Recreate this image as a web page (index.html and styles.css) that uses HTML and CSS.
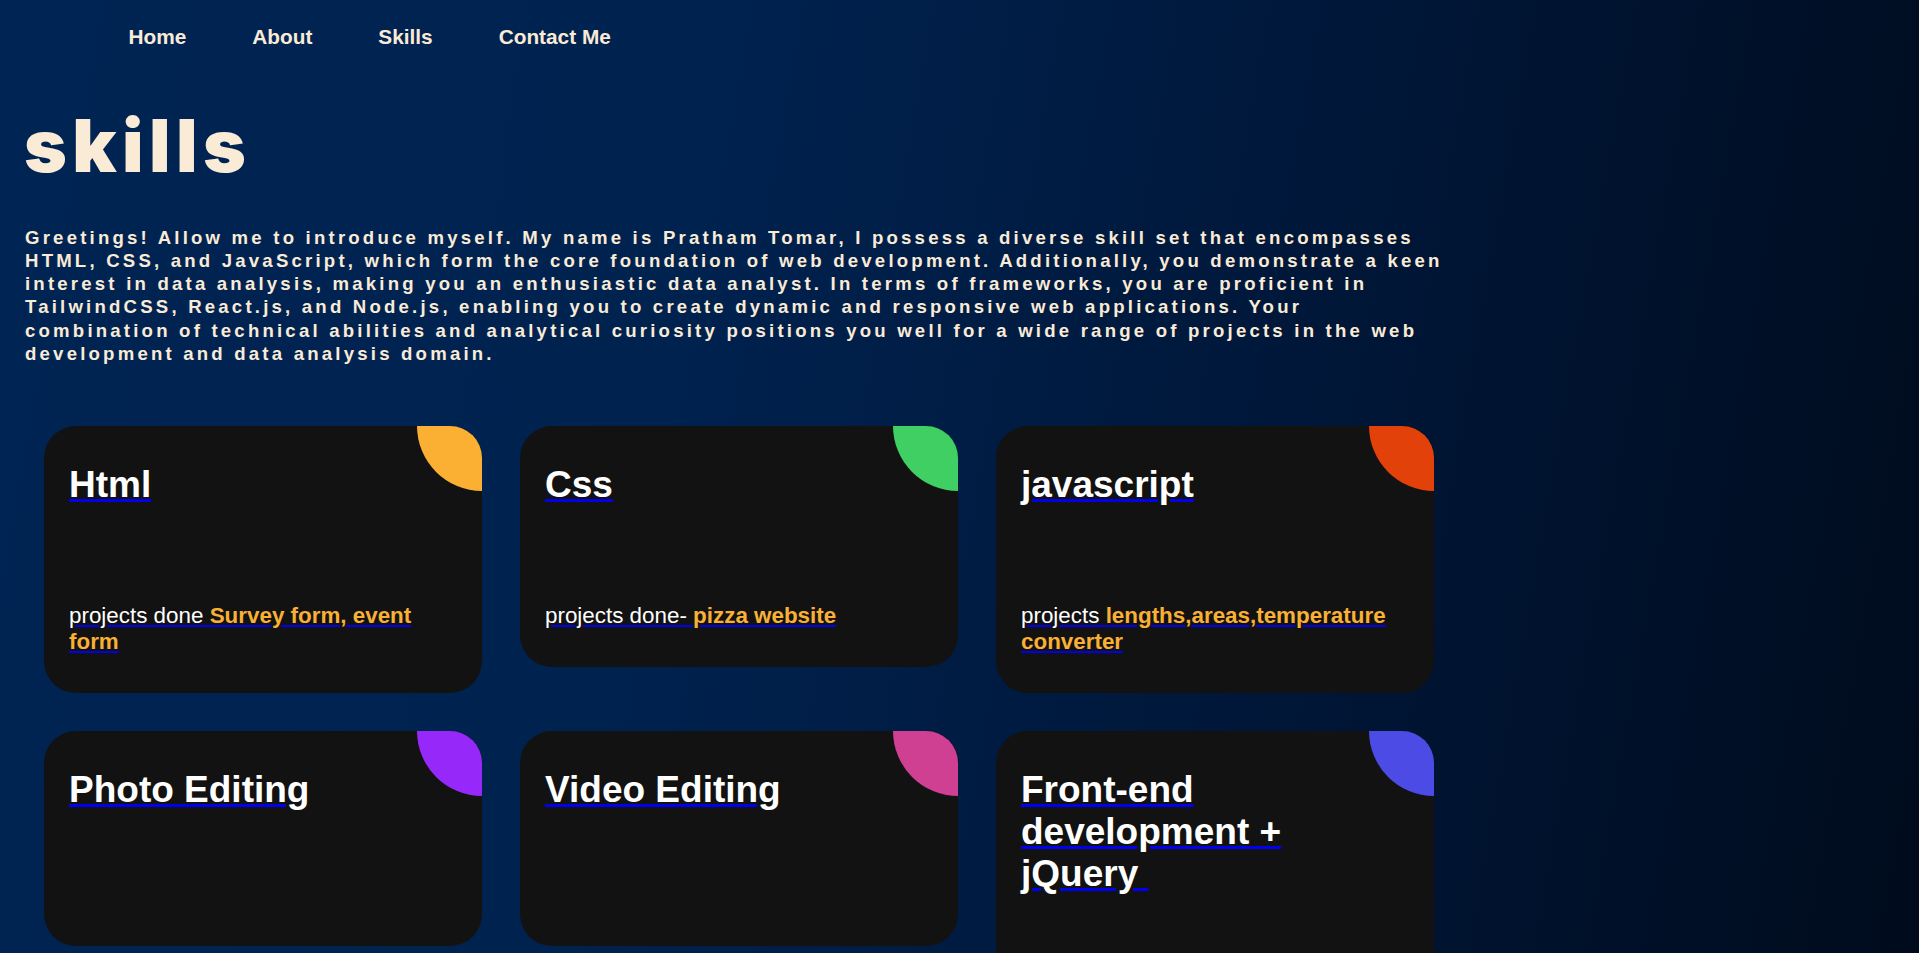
FILE: index.html
```html
<!DOCTYPE html>
<html lang="en">
<head>
<meta charset="utf-8">
<title>Skills</title>
<link rel="stylesheet" href="styles.css">
</head>
<body>
<nav class="nav">
  <ul class="nav-list">
    <li><a class="nav-link" href="#">Home</a></li>
    <li><a class="nav-link" href="#">About</a></li>
    <li><a class="nav-link" href="#">Skills</a></li>
    <li><a class="nav-link" href="#">Contact Me</a></li>
  </ul>
</nav>
<main class="main">
  <h1 class="title">skills</h1>
  <p class="intro">Greetings! Allow me to introduce myself. My name is Pratham Tomar, I possess a diverse skill set that encompasses HTML, CSS, and JavaScript, which form the core foundation of web development. Additionally, you demonstrate a keen interest in data analysis, making you an enthusiastic data analyst. In terms of frameworks, you are proficient in TailwindCSS, React.js, and Node.js, enabling you to create dynamic and responsive web applications. Your combination of technical abilities and analytical curiosity positions you well for a wide range of projects in the web development and data analysis domain.</p>
  <div class="cards">
    <a class="card-link" href="#">
      <div class="card card-orange">
        <h2 class="card-title">Html</h2>
        <p class="card-text">projects done <span class="hl">Survey form, event form</span></p>
      </div>
    </a>
    <a class="card-link" href="#">
      <div class="card card-green">
        <h2 class="card-title">Css</h2>
        <p class="card-text">projects done- <span class="hl">pizza website</span></p>
      </div>
    </a>
    <a class="card-link" href="#">
      <div class="card card-red">
        <h2 class="card-title">javascript</h2>
        <p class="card-text">projects <span class="hl">lengths,areas,temperature converter</span></p>
      </div>
    </a>
    <a class="card-link" href="#">
      <div class="card card-purple">
        <h2 class="card-title">Photo Editing</h2>
      </div>
    </a>
    <a class="card-link" href="#">
      <div class="card card-pink">
        <h2 class="card-title">Video Editing</h2>
      </div>
    </a>
    <a class="card-link" href="#">
      <div class="card card-indigo">
        <h2 class="card-title">Front-end development + jQuery&nbsp;</h2>
      </div>
    </a>
  </div>
</main>
</body>
</html>
```
FILE: styles.css
```css
* {
  box-sizing: border-box;
}

html {
  min-height: 100%;
  background: linear-gradient(100deg, #002453 0%, #00224f 35%, #001739 65%, #000b1c 100%);
}

body {
  margin: 0;
  font-family: "Liberation Sans", Arial, sans-serif;
  color: #faebd7;
  min-height: 100vh;
}

.nav {
  padding: 25px 0 0 128.5px;
}

.nav-list {
  list-style: none;
  margin: 0;
  padding: 0;
  display: flex;
  gap: 66px;
}

.nav-link {
  color: #faebd7;
  text-decoration: none;
  font-weight: bold;
  font-size: 20.8px;
}

.main {
  padding: 0 25px;
}

.title {
  margin: 52px 0 0 -1px;
  font-family: Inter, "Liberation Sans", sans-serif;
  font-size: 73px;
  font-weight: 900;
  letter-spacing: 5.4px;
  line-height: 90px;
  color: #faebd7;
}

.intro {
  width: 1424px;
  margin: 34.6px 0 0;
  font-size: 18.6px;
  line-height: 23.3px;
  letter-spacing: 3.2px;
  font-weight: bold;
  color: #faebd7;
}

.cards {
  display: flex;
  flex-wrap: wrap;
  align-items: flex-start;
  margin-top: 41.6px;
}

.card-link {
  display: block;
  margin: 19px;
  color: #0000ee;
  text-decoration: underline;
}

.card {
  position: relative;
  overflow: hidden;
  width: 438px;
  padding: 38.5px 25px 37.5px;
  border-radius: 32px;
  background: #121212;
  color: #ffffff;
}

.card::before {
  content: "";
  position: absolute;
  top: -65px;
  right: -65px;
  width: 130px;
  height: 130px;
  border-radius: 50%;
  background: var(--accent);
}

.card-orange { --accent: #fbb034; }
.card-green { --accent: #3fcf62; }
.card-red { --accent: #e3410a; }
.card-purple { --accent: #9629f9; }
.card-pink { --accent: #cf3f92; }
.card-indigo { --accent: #4d4be6; }

.card-title {
  position: relative;
  margin: 0 0 97px;
  font-size: 37px;
  font-weight: bold;
  line-height: normal;
}

.card-text {
  position: relative;
  margin: 0;
  font-size: 22.4px;
  line-height: normal;
}

.hl {
  color: #f9b035;
  font-weight: bold;
}
```
